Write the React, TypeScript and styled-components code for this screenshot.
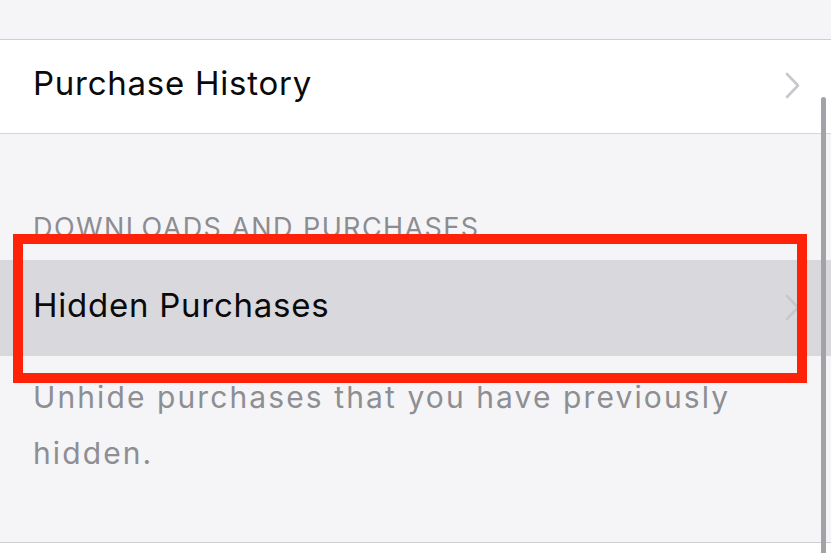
import React from "react";
import styled, { createGlobalStyle } from "styled-components";

const Global = createGlobalStyle`
  html, body { margin: 0; padding: 0; }
  body {
    width: 831px;
    height: 553px;
    overflow: hidden;
    background: #ffffff;
    font-family: Inter, "Noto Sans", "Liberation Sans", sans-serif;
    -webkit-font-smoothing: antialiased;
  }
`;

const Screen = styled.div`
  position: relative;
  width: 831px;
  height: 553px;
  overflow: hidden;
  background: #f5f5f7;
  display: flex;
  flex-direction: column;
`;

const TopGap = styled.div`
  height: 39px;
  flex: none;
  border-bottom: 1px solid #cfced3;
`;

const Row = styled.div<{ $highlight?: boolean }>`
  flex: none;
  height: ${(p) => (p.$highlight ? 96 : 94)}px;
  box-sizing: border-box;
  display: flex;
  align-items: center;
  justify-content: space-between;
  padding: 0 31px 6px 33px;
  background: ${(p) => (p.$highlight ? "#d9d8dd" : "#ffffff")};
  border-bottom: ${(p) => (p.$highlight ? "none" : "1px solid #d6d6da")};
`;

const RowLabel = styled.span`
  font-size: 33px;
  color: #0a0a0a;
  letter-spacing: 0.75px;
  line-height: 1;
`;

const Chevron = styled.svg`
  width: 15px;
  height: 27px;
  flex: none;
  margin-top: 4px;
`;

const SectionHeader = styled.div`
  flex: none;
  height: 126px;
  box-sizing: border-box;
  padding: 80px 0 0 33px;
  font-size: 27px;
  color: #8c8c91;
  letter-spacing: 1.4px;
  line-height: 1;
  white-space: nowrap;
`;

const Footer = styled.div`
  flex: none;
  height: 187px;
  box-sizing: border-box;
  padding: 13px 60px 0 33px;
  font-size: 30px;
  line-height: 56px;
  color: #8e8e93;
  letter-spacing: 2.1px;
  border-bottom: 1px solid #cfced3;
`;

const Rest = styled.div`
  flex: 1;
  background: #ffffff;
`;

const Highlight = styled.div`
  position: absolute;
  left: 13px;
  top: 234px;
  width: 794px;
  height: 149px;
  box-sizing: border-box;
  border: 10px solid #fe2308;
  pointer-events: none;
`;

const ScrollBar = styled.div`
  position: absolute;
  left: 821px;
  top: 97px;
  width: 5px;
  height: 470px;
  border-radius: 3px;
  background: #a3a3a7;
`;

const ChevronIcon = () => (
  <Chevron viewBox="0 0 15 27">
    <path
      d="M2 2 L13 13.5 L2 25"
      fill="none"
      stroke="#c7c7cc"
      strokeWidth="2.6"
      strokeLinecap="round"
      strokeLinejoin="round"
    />
  </Chevron>
);

export default function App() {
  return (
    <>
      <Global />
      <Screen>
        <TopGap />
        <Row>
          <RowLabel>Purchase History</RowLabel>
          <ChevronIcon />
        </Row>
        <SectionHeader>DOWNLOADS AND PURCHASES</SectionHeader>
        <Row $highlight>
          <RowLabel>Hidden Purchases</RowLabel>
          <ChevronIcon />
        </Row>
        <Footer>Unhide purchases that you have previously hidden.</Footer>
        <Rest />
        <Highlight />
        <ScrollBar />
      </Screen>
    </>
  );
}
